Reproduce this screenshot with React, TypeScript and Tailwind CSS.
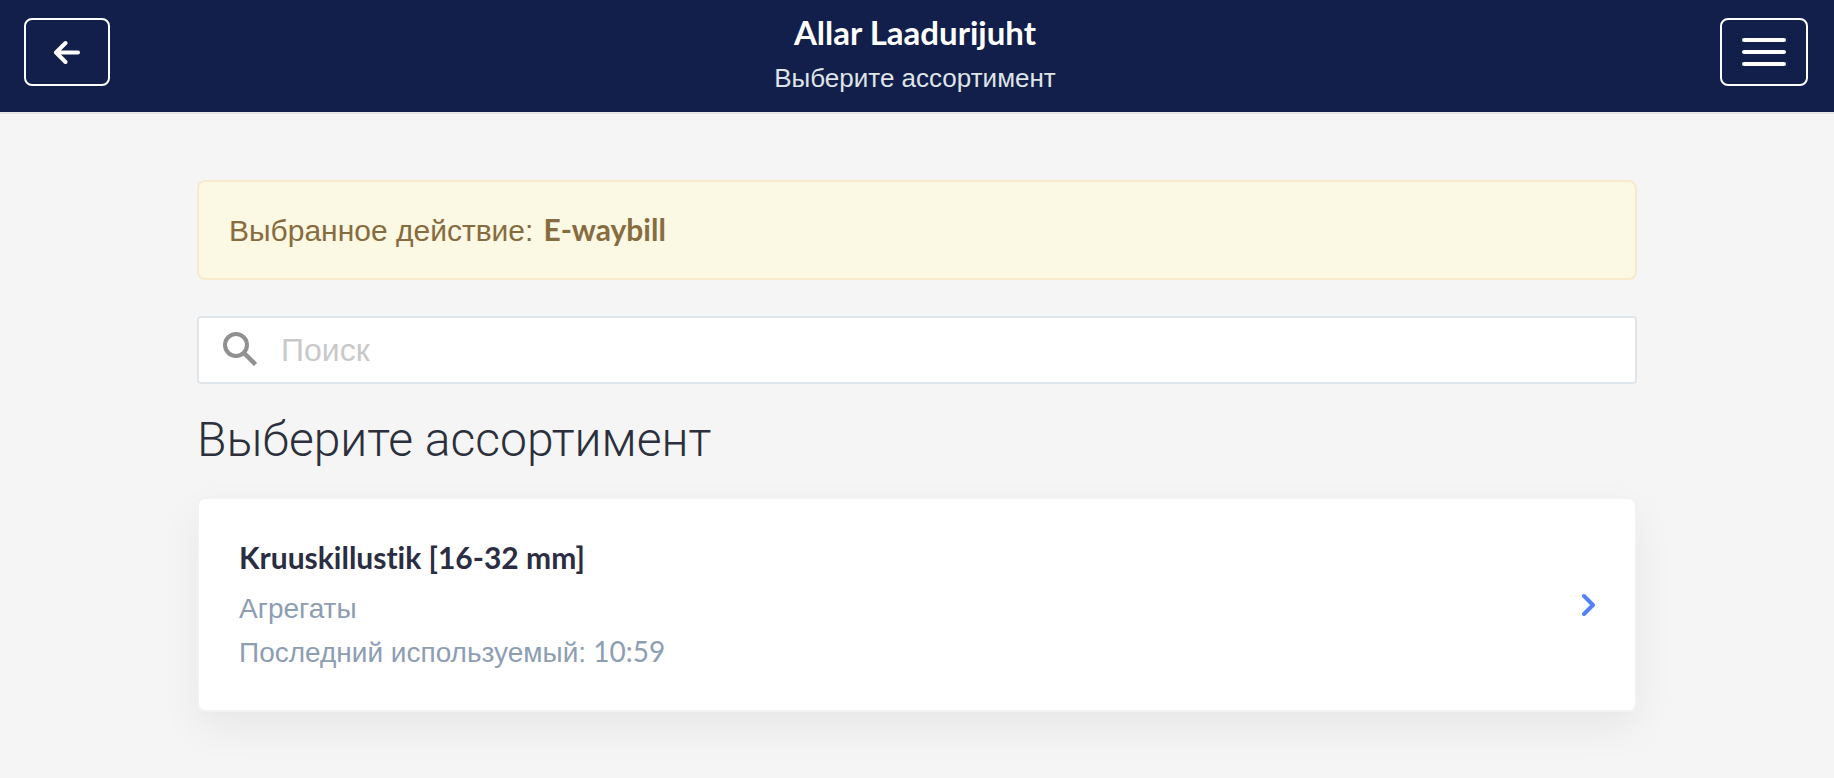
import { useState } from "react";

type Assortment = {
  id: string;
  name: string;
  group: string;
  lastUsed: string;
};

const assortments: Assortment[] = [
  { id: "1", name: "Kruuskillustik [16-32 mm]", group: "Агрегаты", lastUsed: "10:59" },
];

function Header() {
  return (
    <header className="flex items-start justify-between border-b-2 border-[#e6e6e6] bg-[#121f4a] pt-[18px] pr-[26px] pb-[18px] pl-6">
      <button
        type="button"
        aria-label="Назад"
        className="flex h-[68px] w-[86px] items-center justify-center rounded-lg border-2 border-white text-white"
      >
        <svg width="28" height="24" viewBox="0 0 28 24" fill="none" aria-hidden="true">
          <path
            d="M12.5 3 3 12.5l9.5 9.5M4 12.5h21"
            stroke="currentColor"
            strokeWidth="4"
            strokeLinecap="round"
            strokeLinejoin="round"
          />
        </svg>
      </button>
      <div className="-my-1 text-center">
        <h1 className="text-[33px] leading-9 font-bold text-white">Allar Laadurijuht</h1>
        <p className="mt-2 font-['Liberation_Sans',sans-serif] text-[26px] leading-10 text-[#dfe4e8]">
          Выберите ассортимент
        </p>
      </div>
      <button
        type="button"
        aria-label="Меню"
        className="flex h-[68px] w-[88px] flex-col items-center justify-center gap-2 rounded-lg border-2 border-white"
      >
        <span className="h-1 w-11 rounded-full bg-white" />
        <span className="h-1 w-11 rounded-full bg-white" />
        <span className="h-1 w-11 rounded-full bg-white" />
      </button>
    </header>
  );
}

function AssortmentCard({ item }: { item: Assortment }) {
  return (
    <a
      href="#"
      className="flex items-center justify-between rounded-lg border-2 border-[#f1f3f3] bg-white px-10 py-9 shadow-[0_16px_40px_rgba(0,0,0,0.06)]"
    >
      <span>
        <span className="block text-[30px] leading-[44px] font-bold text-[#2b2d42]">{item.name}</span>
        <span className="mt-2 block font-['Liberation_Sans',sans-serif] text-[28px] leading-[43px] text-[#8d9db2]">
          {item.group}
        </span>
        <span className="block text-[28px] leading-[43px] text-[#8d9db2]">
          <span className="font-['Liberation_Sans',sans-serif]">Последний используемый:</span>{" "}
          {item.lastUsed}
        </span>
      </span>
      <svg width="14" height="24" viewBox="0 0 14 24" fill="none" aria-hidden="true">
        <path
          d="M3 3l9 9-9 9"
          stroke="#5383f6"
          strokeWidth="4"
          strokeLinecap="round"
          strokeLinejoin="round"
        />
      </svg>
    </a>
  );
}

export default function App() {
  const [query, setQuery] = useState("");

  const visible = assortments.filter((a) => a.name.toLowerCase().includes(query.toLowerCase()));

  return (
    <div className="min-h-screen bg-[#f5f5f5] font-['Lato','Liberation_Sans',sans-serif] [font-variant-ligatures:none]">
      <Header />
      <main className="mx-auto max-w-[1440px] pt-[66px] pb-16">
        <div className="flex items-baseline gap-[10px] rounded-lg border-2 border-[#f9eacc] bg-[#fbf8e4] px-[30px] py-[26px] text-[30px] leading-[42px] text-[#876c40]">
          <span className="font-['Liberation_Sans',sans-serif]">Выбранное действие:</span>
          <strong className="font-bold">E-waybill</strong>
        </div>

        <label className="mt-9 flex h-[68px] items-center gap-6 rounded border-2 border-[#e0e5e9] bg-white px-[22px]">
          <svg width="36" height="36" viewBox="0 0 36 36" fill="none" stroke="#909090" strokeWidth="4" aria-hidden="true">
            <circle cx="15" cy="13" r="11" />
            <path d="M22.5 20.5l12 12" strokeWidth="4.5" />
          </svg>
          <input
            type="text"
            aria-label="Поиск"
            placeholder="Поиск"
            value={query}
            onChange={(e) => setQuery(e.target.value)}
            className="min-w-0 flex-1 bg-transparent font-['Liberation_Sans',sans-serif] text-[32px] leading-10 text-[#2b2d42] outline-none placeholder:text-[#c9c9c9]"
          />
        </label>

        <h2 className="mt-7 font-['Roboto',sans-serif] text-[48px] leading-[56px] font-light text-[#2b303c]">
          Выберите ассортимент
        </h2>

        <div className="mt-[29px] space-y-6">
          {visible.map((a) => (
            <AssortmentCard key={a.id} item={a} />
          ))}
        </div>
      </main>
    </div>
  );
}
